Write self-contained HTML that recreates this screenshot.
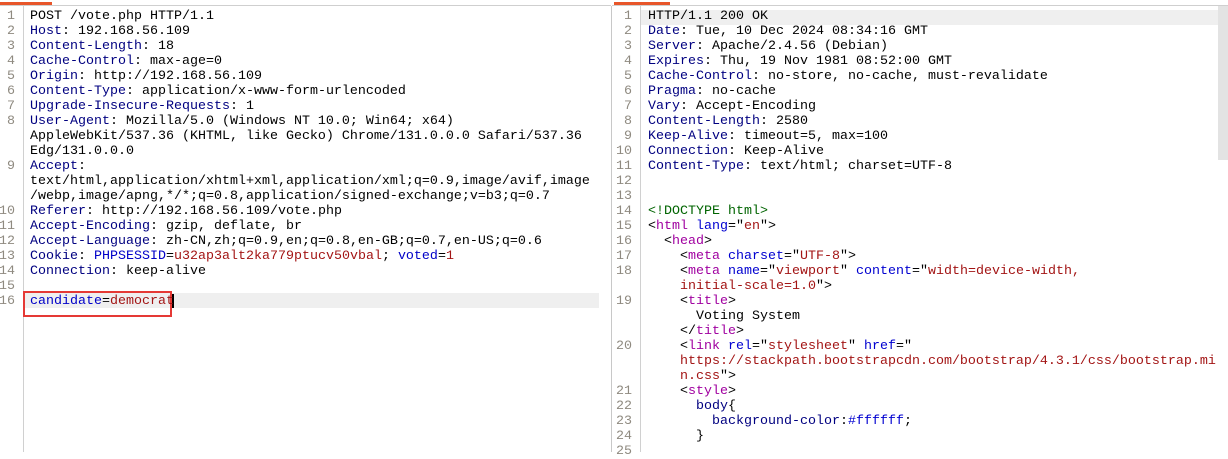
<!DOCTYPE html>
<html><head><style>
body{margin:0;width:1228px;height:452px;background:#fff;position:relative;overflow:hidden;font-family:"Liberation Mono","Courier New",monospace;font-size:13.33px;}
.ln{position:absolute;width:18px;text-align:right;color:#8f8a80;line-height:15px;}
.code{position:absolute;line-height:15px;white-space:pre;color:#000;}
.h{color:#000080}.cn{color:#0000c8}.cv{color:#a31515}
.t{color:#a000a0}.a{color:#0000d0}.v{color:#a31515}.d{color:#006400}
</style></head><body>
<div style="position:absolute;left:0;top:5px;width:611px;height:1px;background:#cfcfcf"></div>
<div style="position:absolute;left:612px;top:5px;width:616px;height:1px;background:#cfcfcf"></div>
<div style="position:absolute;left:0;top:2px;width:52px;height:3px;background:#e8562a"></div>
<div style="position:absolute;left:614px;top:2px;width:56px;height:3px;background:#e8562a"></div>
<div style="position:absolute;left:23px;top:6px;width:1px;height:446px;background:#d0d0d0"></div>
<div style="position:absolute;left:611px;top:6px;width:1px;height:446px;background:#c8c8c8"></div>
<div style="position:absolute;left:640px;top:6px;width:1px;height:446px;background:#d0d0d0"></div>
<div style="position:absolute;left:1218px;top:6px;width:10px;height:154px;background:#e3e3e3"></div>
<div style="position:absolute;left:24px;top:293px;width:575px;height:15px;background:#efefef"></div>
<div style="position:absolute;left:641px;top:10px;width:577px;height:15px;background:#efefef"></div>
<div style="position:absolute;left:23px;top:291px;width:145px;height:22px;border:2px solid #e53935"></div>
<div style="position:absolute;left:172px;top:294px;width:2px;height:14px;background:#000"></div>

<div class="ln" style="left:-3px;top:9px">1<br>2<br>3<br>4<br>5<br>6<br>7<br>8<br><br><br>9<br><br><br>10<br>11<br>12<br>13<br>14<br>15<br>16</div>
<div class="code" style="left:30px;top:9px">POST /vote.php HTTP/1.1
<span class="h">Host</span>: 192.168.56.109
<span class="h">Content-Length</span>: 18
<span class="h">Cache-Control</span>: max-age=0
<span class="h">Origin</span>: http://192.168.56.109
<span class="h">Content-Type</span>: application/x-www-form-urlencoded
<span class="h">Upgrade-Insecure-Requests</span>: 1
<span class="h">User-Agent</span>: Mozilla/5.0 (Windows NT 10.0; Win64; x64)
AppleWebKit/537.36 (KHTML, like Gecko) Chrome/131.0.0.0 Safari/537.36
Edg/131.0.0.0
<span class="h">Accept</span>:
text/html,application/xhtml+xml,application/xml;q=0.9,image/avif,image
/webp,image/apng,*/*;q=0.8,application/signed-exchange;v=b3;q=0.7
<span class="h">Referer</span>: http://192.168.56.109/vote.php
<span class="h">Accept-Encoding</span>: gzip, deflate, br
<span class="h">Accept-Language</span>: zh-CN,zh;q=0.9,en;q=0.8,en-GB;q=0.7,en-US;q=0.6
<span class="h">Cookie</span>: <span class="cn">PHPSESSID</span>=<span class="cv">u32ap3alt2ka779ptucv50vbal</span>; <span class="cn">voted</span>=<span class="cv">1</span>
<span class="h">Connection</span>: keep-alive

<span class="cn">candidate</span>=<span class="cv">democrat</span></div>

<div class="ln" style="left:614px;top:9px">1<br>2<br>3<br>4<br>5<br>6<br>7<br>8<br>9<br>10<br>11<br>12<br>13<br>14<br>15<br>16<br>17<br>18<br><br>19<br><br><br>20<br><br><br>21<br>22<br>23<br>24<br>25</div>
<div class="code" style="left:648px;top:9px">HTTP/1.1 200 OK
<span class="h">Date</span>: Tue, 10 Dec 2024 08:34:16 GMT
<span class="h">Server</span>: Apache/2.4.56 (Debian)
<span class="h">Expires</span>: Thu, 19 Nov 1981 08:52:00 GMT
<span class="h">Cache-Control</span>: no-store, no-cache, must-revalidate
<span class="h">Pragma</span>: no-cache
<span class="h">Vary</span>: Accept-Encoding
<span class="h">Content-Length</span>: 2580
<span class="h">Keep-Alive</span>: timeout=5, max=100
<span class="h">Connection</span>: Keep-Alive
<span class="h">Content-Type</span>: text/html; charset=UTF-8


<span class="d">&lt;!DOCTYPE html&gt;</span>
&lt;<span class="t">html</span> <span class="a">lang</span>="<span class="v">en</span>"&gt;
  &lt;<span class="t">head</span>&gt;
    &lt;<span class="t">meta</span> <span class="a">charset</span>="<span class="v">UTF-8</span>"&gt;
    &lt;<span class="t">meta</span> <span class="a">name</span>="<span class="v">viewport</span>" <span class="a">content</span>="<span class="v">width=device-width,</span>
    <span class="v">initial-scale=1.0</span>"&gt;
    &lt;<span class="t">title</span>&gt;
      Voting System
    &lt;/<span class="t">title</span>&gt;
    &lt;<span class="t">link</span> <span class="a">rel</span>="<span class="v">stylesheet</span>" <span class="a">href</span>="
    <span class="v">https://stackpath.bootstrapcdn.com/bootstrap/4.3.1/css/bootstrap.mi</span>
    <span class="v">n.css</span>"&gt;
    &lt;<span class="t">style</span>&gt;
      <span class="h">body</span>{
        <span class="h">background-color</span>:<span class="a">#ffffff</span>;
      }
</div>
</body></html>
